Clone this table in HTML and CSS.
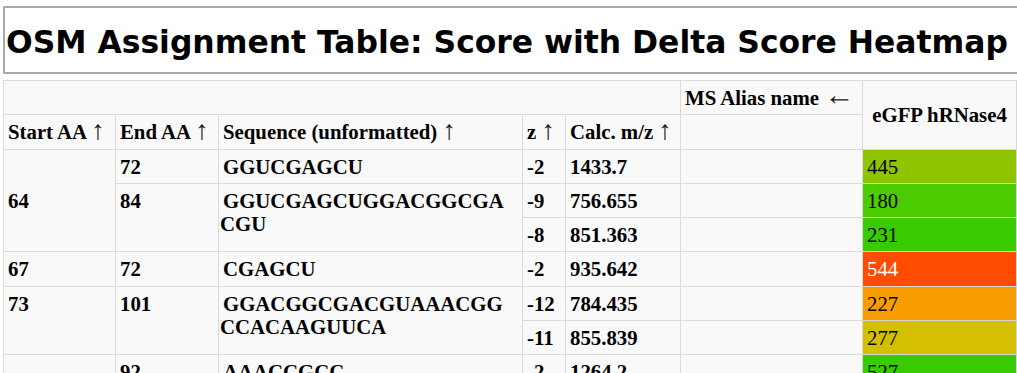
FILE: index.html
```html
<!DOCTYPE html>
<html>
<head>
<meta charset="utf-8">
<link rel="stylesheet" href="styles.css">
</head>
<body>
<div class="page">
  <div class="title-box"><h1 class="title">OSM Assignment Table: Score with Delta Score Heatmap</h1></div>
  <table class="osm">
    <colgroup>
      <col class="c-start"><col class="c-end"><col class="c-seq"><col class="c-z"><col class="c-mz"><col class="c-alias"><col class="c-heat">
    </colgroup>
    <thead>
      <tr>
        <th colspan="5"></th>
        <th class="alias">MS Alias name <span class="arr arr-h">←</span></th>
        <th rowspan="2" class="heat-h">eGFP hRNase4</th>
      </tr>
      <tr>
        <th>Start AA <span class="arr">↑</span></th>
        <th>End AA <span class="arr">↑</span></th>
        <th>Sequence (unformatted) <span class="arr">↑</span></th>
        <th>z <span class="arr">↑</span></th>
        <th>Calc. m/z <span class="arr">↑</span></th>
        <th></th>
      </tr>
    </thead>
    <tbody>
      <tr>
        <td rowspan="3" class="grp">64</td>
        <td>72</td>
        <td class="seq">GGUCGAGCU</td>
        <td>-2</td>
        <td>1433.7</td>
        <td></td>
        <td class="heat" style="background:#8fc400">445</td>
      </tr>
      <tr>
        <td rowspan="2">84</td>
        <td rowspan="2" class="seq">GGUCGAGCUGGACGGCGACGU</td>
        <td>-9</td>
        <td>756.655</td>
        <td></td>
        <td class="heat" style="background:#4ccb00">180</td>
      </tr>
      <tr>
        <td>-8</td>
        <td>851.363</td>
        <td></td>
        <td class="heat" style="background:#38cc00">231</td>
      </tr>
      <tr>
        <td class="grp">67</td>
        <td>72</td>
        <td class="seq">CGAGCU</td>
        <td>-2</td>
        <td>935.642</td>
        <td></td>
        <td class="heat light" style="background:#ff4c00">544</td>
      </tr>
      <tr>
        <td rowspan="2">73</td>
        <td rowspan="2">101</td>
        <td rowspan="2" class="seq">GGACGGCGACGUAAACGGCCACAAGUUCA</td>
        <td>-12</td>
        <td>784.435</td>
        <td></td>
        <td class="heat" style="background:#f99c00">227</td>
      </tr>
      <tr>
        <td>-11</td>
        <td>855.839</td>
        <td></td>
        <td class="heat" style="background:#d5c000">277</td>
      </tr>
      <tr>
        <td rowspan="3" class="grp">85</td>
        <td>92</td>
        <td class="seq">AAACCGCC</td>
        <td>-2</td>
        <td>1264.2</td>
        <td></td>
        <td class="heat" style="background:#38cc00">527</td>
      </tr>
      <tr>
        <td>96</td>
        <td class="seq">AAACCGCCGGUC</td>
        <td>-3</td>
        <td>1290.5</td>
        <td></td>
        <td class="heat" style="background:#6cc800">312</td>
      </tr>
      <tr>
        <td>99</td>
        <td class="seq">AAACCGCCGGUCAGG</td>
        <td>-4</td>
        <td>1205.9</td>
        <td></td>
        <td class="heat" style="background:#c4c200">401</td>
      </tr>
    </tbody>
  </table>
</div>
</body>
</html>
```

FILE: styles.css
```css
html, body {
  margin: 0;
  padding: 0;
  background: #ffffff;
}

body {
  overflow: hidden;
}

.page {
  padding: 6px 0 0 3px;
  width: 1040px;
}

.title-box {
  border: 2px solid #a9a9a9;
  background: #ffffff;
  padding: 16px 1px 12px;
  margin-bottom: 6px;
  width: 1022px;
}

.title {
  margin: 0;
  font-family: "DejaVu Sans", Verdana, sans-serif;
  font-weight: bold;
  font-size: 31.4px;
  line-height: normal;
  color: #000;
  white-space: nowrap;
}

.osm {
  border-collapse: collapse;
  table-layout: fixed;
  width: 1013px;
  font-family: "Liberation Serif", "Times New Roman", serif;
  font-size: 20.8px;
  font-weight: bold;
  color: #000;
  background: #f9f9f9;
}

.c-start { width: 112px; }
.c-end { width: 103px; }
.c-seq { width: 304px; }
.c-z { width: 43px; }
.c-mz { width: 115px; }
.c-alias { width: 182px; }
.c-heat { width: 154px; }

.osm th,
.osm td {
  border: 1px solid #dadada;
  padding: 5px 4px;
  text-align: left;
  vertical-align: middle;
  line-height: 23.3px;
  white-space: normal;
}

.osm td {
  vertical-align: top;
}

.osm td.grp {
  vertical-align: middle;
}

.osm th.alias {
  white-space: nowrap;
}

.osm th.heat-h {
  text-align: center;
  white-space: nowrap;
}

.osm td.seq {
  word-break: break-all;
  text-indent: 3px;
  padding-left: 1px;
  padding-right: 9px;
}

.osm td.heat {
  font-weight: normal;
  border-color: #d6d6d6;
}

.osm td.heat.light {
  color: #ffffff;
}

.arr {
  font-weight: normal;
  font-size: 1.3em;
  line-height: 0;
  color: #1a1a1a;
}

.arr-h {
  font-size: 1.45em;
}
```
